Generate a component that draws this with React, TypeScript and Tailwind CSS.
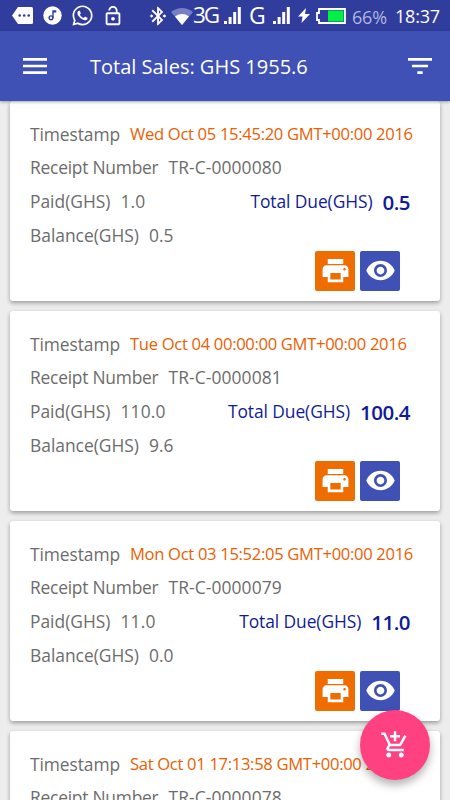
import { FaWhatsapp } from "react-icons/fa";
import {
  MdAddShoppingCart,
  MdBluetoothConnected,
  MdFilterList,
  MdLockOpen,
  MdMenu,
  MdPrint,
  MdRemoveRedEye,
} from "react-icons/md";

const sales = [
  {
    time: "Wed Oct 05 15:45:20 GMT+00:00 2016",
    receipt: "TR-C-0000080",
    paid: "1.0",
    due: "0.5",
    balance: "0.5",
  },
  {
    time: "Tue Oct 04 00:00:00 GMT+00:00 2016",
    receipt: "TR-C-0000081",
    paid: "110.0",
    due: "100.4",
    balance: "9.6",
  },
  {
    time: "Mon Oct 03 15:52:05 GMT+00:00 2016",
    receipt: "TR-C-0000079",
    paid: "11.0",
    due: "11.0",
    balance: "0.0",
  },
  {
    time: "Sat Oct 01 17:13:58 GMT+00:00 2016",
    receipt: "TR-C-0000078",
  },
];

const Signal = () => (
  <svg className="w-[17px] h-[17px] shrink-0" viewBox="0 0 17 17" fill="#fff">
    <rect x="0" y="14" width="3" height="3" />
    <rect x="4.6" y="10" width="3" height="7" />
    <rect x="9.2" y="5" width="3" height="12" />
    <rect x="13.8" y="0" width="3" height="17" />
  </svg>
);

const StatusBar = () => (
  <div className="h-[31px] shrink-0 bg-[#303d9d] flex items-center text-white">
    <svg className="w-[22px] h-[17px] ml-[12px] shrink-0" viewBox="0 0 22 17">
      <path d="M6 0h13.5a1.5 1.5 0 0 1 1.5 1.5v14a1.5 1.5 0 0 1-1.5 1.5H6L0 8.5z" fill="#fff" />
      <g fill="#303d9d">
        <circle cx="7.7" cy="8.5" r="1.3" />
        <circle cx="12.2" cy="8.5" r="1.3" />
        <circle cx="16.7" cy="8.5" r="1.3" />
      </g>
    </svg>
    <svg className="w-[19px] h-[19px] ml-[9px] shrink-0" viewBox="0 0 19 19">
      <circle cx="9.5" cy="9.5" r="9.2" fill="#fff" />
      <circle cx="8" cy="11.8" r="1.9" fill="none" stroke="#303d9d" strokeWidth="1.4" />
      <path d="M9.3 11.8V4.2h4v2.2h-2.6v5.4z" fill="#303d9d" />
    </svg>
    <FaWhatsapp className="ml-[9px] size-[23px] shrink-0" />
    <MdLockOpen className="ml-[8px] size-[22px] shrink-0" />
    <MdBluetoothConnected className="ml-[23px] size-[22px] shrink-0" />
    <svg className="w-[22px] h-[17px] ml-[2px] mt-[2px] shrink-0" viewBox="0 0 22 17">
      <path d="M0 4Q11-4 22 4L11 17z" fill="#7680c4" />
      <path d="M4 8.4Q11 3.6 18 8.4L11 17z" fill="#fff" />
    </svg>
    <span className="w-[28px] h-[31px] shrink-0 text-[22.5px] leading-[30px] tracking-[-2px] whitespace-nowrap">
      3G
    </span>
    <div className="ml-[3px]">
      <Signal />
    </div>
    <span className="ml-[8px] w-[19px] h-[31px] shrink-0 text-[23px] leading-[30px]">G</span>
    <div className="ml-[5px]">
      <Signal />
    </div>
    <svg className="w-[12px] h-[15px] ml-[8px] shrink-0" viewBox="0 0 12 15">
      <path d="M8 0L0 8.5h4.5L3.5 15 12 6H7z" fill="#fff" />
    </svg>
    <svg className="w-[30px] h-[16px] ml-[6px] shrink-0" viewBox="0 0 30 16">
      <path d="M3 1h26v14H3v-3H1V5h2z" fill="#303d9d" stroke="#fff" strokeWidth="1.8" />
      <rect x="12" y="2.5" width="15.5" height="11" fill="#00f044" />
    </svg>
    <span className="ml-[6px] mt-[2px] w-[35px] shrink-0 text-[18px] leading-[28px] tracking-[-0.2px] text-[#b0b6df] whitespace-nowrap">
      66%
    </span>
    <span className="ml-[8px] mt-px text-[18px] leading-[28px] tracking-[-0.2px] whitespace-nowrap">18:37</span>
  </div>
);

type Sale = {
  time: string;
  receipt: string;
  paid?: string;
  due?: string;
  balance?: string;
};

const SaleCard = ({ sale }: { sale: Sale }) => (
  <div className="h-[200px] shrink-0 bg-white rounded-[3px] shadow-[0_2px_4px_rgba(0,0,0,0.35)] pt-4 px-5 text-[17.4px] text-[#6c6c6c] whitespace-nowrap">
    <div className="h-[33.7px] flex items-center">
      <span className="w-[100px] tracking-[-0.08px]">Timestamp</span>
      <span className="mt-px text-[#ec6000] text-[16.6px] tracking-[-0.32px]">{sale.time}</span>
    </div>
    <div className="h-[33.7px] flex items-center gap-[10px]">
      <span className="tracking-[-0.23px]">Receipt Number</span>
      <span className="tracking-[0.1px]">{sale.receipt}</span>
    </div>
    {sale.due && (
      <>
        <div className="h-[33.7px] flex items-center gap-[10px]">
          <span>Paid(GHS)</span>
          <span className="tracking-[0.2px]">{sale.paid}</span>
          <span className="ml-auto tracking-[-0.08px] text-[#101c96]">Total Due(GHS)</span>
          <span className="mt-[2px] mr-[10px] text-[20.5px] font-semibold tracking-[-0.5px] text-[#101c96]">
            {sale.due}
          </span>
        </div>
        <div className="h-[33.7px] flex items-center gap-[10px]">
          <span>Balance(GHS)</span>
          <span>{sale.balance}</span>
        </div>
        {/* Actions */}
        <div className="flex justify-end gap-[5px] mt-[-0.8px] mr-5 text-white">
          <button className="size-10 rounded-[2px] bg-[#ef6c00] flex items-center justify-center">
            <MdPrint className="size-[31px]" />
          </button>
          <button className="size-10 rounded-[2px] bg-[#3f51b5] flex items-center justify-center">
            <MdRemoveRedEye className="size-[31px]" />
          </button>
        </div>
      </>
    )}
  </div>
);

const App = () => {
  return (
    <div className="relative w-[450px] h-[800px] overflow-hidden flex flex-col bg-[#ededed] font-['Open_Sans','Noto_Sans',sans-serif]">
      <StatusBar />
      <header className="relative z-10 h-[70px] shrink-0 bg-[#3f51b5] text-white flex items-center px-[19px] shadow-[0_1px_3px_rgba(0,0,0,0.35)]">
        <MdMenu className="size-8" />
        <h1 className="ml-[39px] mt-[2px] text-[20px] whitespace-nowrap">Total Sales: GHS 1955.6</h1>
        <MdFilterList className="ml-auto -mr-[5px] size-8" />
      </header>
      <main className="flex flex-col gap-[10px] px-[10px]">
        {sales.map((sale) => (
          <SaleCard key={sale.receipt} sale={sale} />
        ))}
      </main>
      <button className="absolute left-[360px] top-[710px] z-20 size-[70px] rounded-full bg-[#ff4081] text-white flex items-center justify-center shadow-[0_5px_8px_rgba(0,0,0,0.3)]">
        <MdAddShoppingCart className="size-[30px]" />
      </button>
    </div>
  );
};

export default App;
